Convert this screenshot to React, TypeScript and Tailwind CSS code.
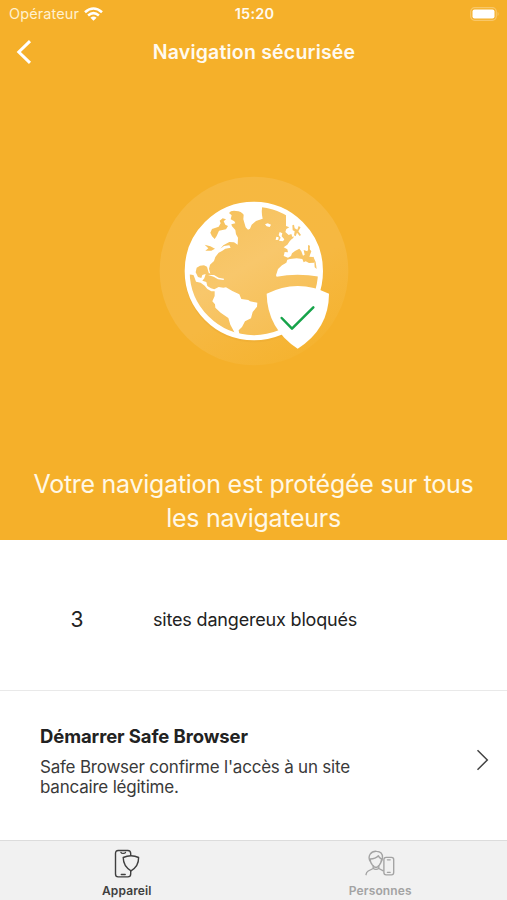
function StatusBar() {
  return (
    <div className="grid h-7 grid-cols-3 items-center pl-[9px] pr-[7px] text-[14.5px] text-[#fff1cf]">
      <div className="flex items-center gap-[5px]">
        <span className="tracking-[0.1px]">Opérateur</span>
        <svg className="-mt-px h-[14px] w-[19px]" viewBox="0 0 19 14">
          <g fill="none" stroke="#fff" strokeWidth="2.6">
            <path d="M1 5.2Q9.5-2.2 18 5.2" />
            <path d="M4.1 8.4Q9.5 3.9 14.9 8.4" />
          </g>
          <path d="M6.4 10.7Q9.5 8.3 12.6 10.7L9.5 13.8Z" fill="#fff" />
        </svg>
      </div>
      <span className="text-center font-semibold tracking-[0.2px] text-[#fffaf0]">15:20</span>
      <svg className="-mt-px h-[14px] w-[30px] justify-self-end" viewBox="0 0 30 14">
        <rect x="0.7" y="0.7" width="25.6" height="12.6" rx="4" fill="none" stroke="#f8c768" strokeWidth="1.2" />
        <rect x="2.5" y="2.5" width="22" height="9" rx="2" fill="#fff" />
        <path d="M27.6 4.8Q29.6 7 27.6 9.2Z" fill="#f8c768" />
      </svg>
    </div>
  );
}

function Globe() {
  return (
    <svg className="h-[190px] w-[190px]" viewBox="-63 -58 570 570">
      <defs>
        <clipPath id="disc">
          <circle cx="221.5" cy="227" r="200" />
        </clipPath>
        <linearGradient id="halo" x1="0.2" y1="0" x2="0.8" y2="1">
          <stop offset="0" stopColor="#f6b840" />
          <stop offset="0.6" stopColor="#f6b841" />
          <stop offset="1" stopColor="#f5b22d" />
        </linearGradient>
        <linearGradient id="ocean" x1="0.2" y1="0" x2="0.8" y2="1">
          <stop offset="0" stopColor="#f6c15b" />
          <stop offset="0.45" stopColor="#f8c76b" />
          <stop offset="1" stopColor="#f6bd50" />
        </linearGradient>
      </defs>
      <circle cx="222" cy="227" r="283" fill="url(#halo)" />
      <circle cx="221.5" cy="233" r="208" fill="#e9a52e" opacity="0.3" />
      <circle cx="221.5" cy="227" r="200" fill="url(#ocean)" />
      <g clipPath="url(#disc)" fill="#fff" strokeLinejoin="round">
        <path
          fillRule="evenodd"
          d="M36 238L0 235V0H248L246 40Q244 54 248 70L228 77L215 88L210 100L204 103L197 96L193 82L190 72L191 58Q184 48 168 47Q152 45 147 53L155 60L152 72L163 78L166 84L154 87L156 93L166 104L168 117L174 127L173 148L162 141L148 140L130 150L121 160L132 152L148 150L152 157L136 160L126 167L116 172L106 185L102 197L90 208L87 220L91 235L86 232L81 214L72 210L60 211L50 217L47 231L54 245L64 248L67 239L77 236L73 249L67 256L79 260L82 272L93 279L103 282L116 275L130 277L138 276L157 287L178 297L184 311L205 314L210 318L232 322L231 334L218 350L213 369L195 378L186 395L176 405L178 416L164 412L151 388L145 368L122 352L106 337L105 327L97 318L104 302L104 288L94 288L82 281L74 271L62 262L48 259L41 240Z
             M119 76L128 69L138 72L131 78L136 88L144 92L138 102L117 106L110 122L104 131L96 123L91 112L96 101L116 94L122 84Z
             M74 148L91 153L105 160L94 166L76 166L85 159Z"
        />
        <path d="M318 40V92L328 96L319 101L316 110L326 119L334 116L338 128L329 138L322 148L311 156L322 162L324 171L314 170L311 182L324 187L333 182L336 174L345 167L358 160L364 168L369 181L374 178L371 164L382 168L386 158L394 168L388 184L400 185L403 202L387 203L377 198L371 201L367 191L350 189L330 191L322 193L319 202L306 210L294 221L288 240L290 244Q350 233 420 244H450V40Z" />
        <path d="M255 87L263 84L273 88L269 95L260 93Z" />
        <path d="M299 110L307 114L305 123L313 132L309 138L297 136L302 127L296 119ZM289 124L296 126L295 133L287 134Z" />
        <path d="M84 239L102 239L116 247L132 250L131 254L114 252L101 244Z" />
      </g>
      <g fill="#f8c76b">
        <path d="M337 90L342 88L344 99L352 103L356 92L362 96L355 108L363 119L359 122L351 112L347 123L342 120L344 108L338 105Z" />
        <path d="M384 149L390 151L389 165L384 162ZM400 184L407 200L410 221L404 216L403 201L394 188Z" />
        <path d="M326 130L341 123L340 128L329 134Z" />
      </g>
      <circle cx="221.5" cy="227" r="200" fill="none" stroke="#fff" strokeWidth="15" />
      <path d="M260 295Q305 273 353 272Q403 273 447 295Q447 400 353 460Q262 400 260 295Z" fill="#fff" />
      <path d="M305 368L336 400L400 336" fill="none" stroke="#16a34a" strokeWidth="7.5" strokeLinecap="round" strokeLinejoin="round" />
    </svg>
  );
}

function DeviceIcon() {
  return (
    <svg className="h-[30px] w-[26px]" viewBox="0 0 26 30" fill="none" stroke="#3f3f3f" strokeWidth="1.4" strokeLinejoin="round" strokeLinecap="round">
      <path d="M16.7 6V4.4Q16.7 1.5 13.8 1.5H4.2Q1.5 1.5 1.5 4.4V25Q1.5 27.9 4.2 27.9H13.8Q16.7 27.9 16.7 25V22" />
      <path d="M7 3.4Q7.4 4.4 9.2 4.4Q11 4.4 11.4 3.4M7.3 25.5H11.2" />
      <path d="M9.2 8.5Q13 6.7 17 6.7Q21 6.7 24.6 8.5Q24.8 17.3 17 21.8Q9.3 17.3 9.2 8.5Z" />
    </svg>
  );
}

function PeopleIcon() {
  return (
    <svg className="h-[27px] w-[30px]" viewBox="0 0 30 27" fill="none" stroke="#a3a3a3" strokeWidth="1.35" strokeLinejoin="round" strokeLinecap="round">
      <path d="M5.3 11.5Q2.9 7.7 5.2 4.2Q7.3 1 11.6 1.3Q17.7 1.5 17.5 7.5Q17.4 9.7 16.4 11.5" />
      <path d="M5.1 9Q10.5 9 13.4 5.8Q14 8 16.6 9Q16.4 12.6 14.4 15L12.6 16.8Q11 17.7 9.3 16.8L7.4 15Q5.3 12.6 5.1 9Z" />
      <path d="M8.2 16.2V18.5Q10.9 20.3 13.8 18.5V16.2M8.2 18.5L3.2 21Q1.3 22.3 1 24.7M13.8 18.5L18.3 20.8" />
      <rect x="18.9" y="7.3" width="9.8" height="17.5" rx="2.2" />
      <path d="M22.4 9.8H25.2M22.4 22.3H25.2" />
    </svg>
  );
}

export default function App() {
  return (
    <div className="flex h-[900px] w-[507px] flex-col overflow-hidden bg-white font-['Inter','Liberation_Sans',sans-serif] text-[#222]">
      <section className="flex h-[540px] flex-col bg-[#f5b02a]">
        <StatusBar />
        <header className="grid h-12 grid-cols-[40px_1fr_40px] items-center pl-4 pr-[15px]">
          <svg className="h-6 w-4" viewBox="0 0 16 24" fill="none" stroke="#fff" strokeWidth="3">
            <path d="M14 1.2L2.8 12L14 22.8" />
          </svg>
          <h1 className="pt-[2px] text-center text-[19.5px] font-semibold tracking-[0.2px] text-[#fffaf0]">Navigation sécurisée</h1>
        </header>
        <div className="mt-[100px] flex justify-center">
          <Globe />
        </div>
        <p className="mt-[101px] text-center text-[25px] leading-[34px] tracking-[-0.27px] text-[#fff8e6]">
          Votre navigation est protégée sur tous
          <br />
          les navigateurs
        </p>
      </section>
      <section className="flex h-[150px] items-center pt-[9px]">
        <span className="w-[154px] text-center text-[21px]">3</span>
        <span className="-ml-px text-[18px] tracking-[-0.18px]">sites dangereux bloqués</span>
      </section>
      <section className="flex h-[150px] items-center justify-between border-t border-[#e9e9e9] pl-10 pr-[18px]">
        <div className="-mt-[11px]">
          <h2 className="text-[18.5px] font-bold leading-6 tracking-[-0.1px]">Démarrer Safe Browser</h2>
          <p className="mt-[9px] text-[17px] leading-[20px] tracking-[-0.21px] text-[#3a3a3a]">
            Safe Browser confirme l'accès à un site
            <br />
            bancaire légitime.
          </p>
        </div>
        <svg className="-mt-[11px] h-[22px] w-[13px]" viewBox="0 0 13 22" fill="none" stroke="#444" strokeWidth="1.5">
          <path d="M1.5 1.3L11.3 11L1.5 20.7" />
        </svg>
      </section>
      <nav className="grid h-[60px] grid-cols-2 border-t border-[#dcdcdc] bg-[#f1f1f1] text-[12px] font-semibold leading-4 tracking-[0.12px]">
        <div className="flex flex-col items-center pt-[8px] text-[#3f3f3f]">
          <DeviceIcon />
          <span className="mt-[4px]">Appareil</span>
        </div>
        <div className="flex flex-col items-center pt-[9px] text-[#a3a3a3]">
          <PeopleIcon />
          <span className="mt-[6px]">Personnes</span>
        </div>
      </nav>
    </div>
  );
}
